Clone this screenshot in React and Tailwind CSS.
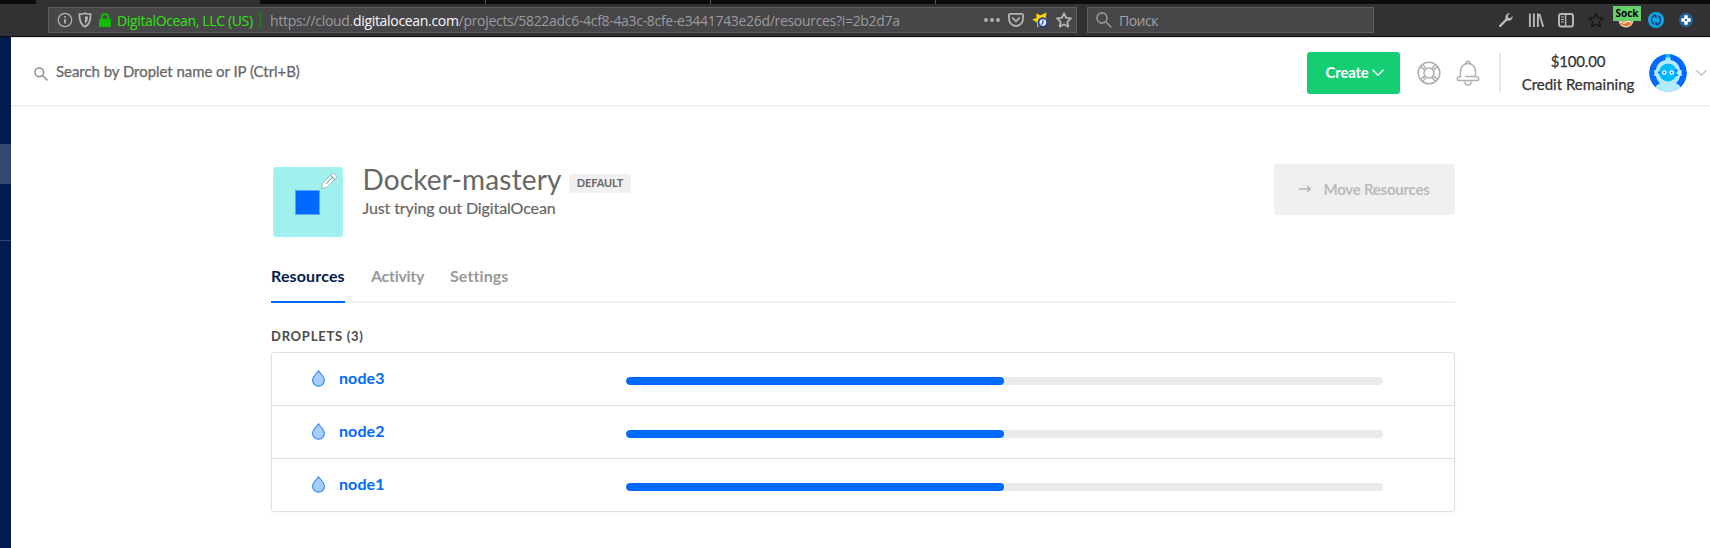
import React from "react";

const nodes = [
  { name: "node3", used: 49.9 },
  { name: "node2", used: 49.9 },
  { name: "node1", used: 49.9 },
];

function StarIcon({ className }) {
  return (
    <svg viewBox="0 0 16 16" width="16" height="16" className={className} fill="none" stroke="currentColor">
      <path d="M8 1.4l2.1 4.4 4.8.6-3.5 3.4.9 4.8L8 12.3l-4.3 2.3.9-4.8L1.1 6.4l4.8-.6z" strokeLinejoin="round" />
    </svg>
  );
}

function MagnifierIcon({ size, className, stroke }) {
  return (
    <svg viewBox="0 0 16 16" width={size} height={size} className={className} fill="none" stroke="currentColor" strokeWidth={stroke}>
      <circle cx="6" cy="6" r="5" />
      <path d="M9.7 9.7l5.6 5.6" />
    </svg>
  );
}

function AddressBar() {
  return (
    <div className="ml-12 flex h-[26px] w-[1029px] items-center border border-[#5e5e60] bg-[#474749] pl-2 pr-1">
      <svg viewBox="0 0 16 16" width="16" height="16" className="-mt-px" fill="none" stroke="#b4b4b5">
        <circle cx="8" cy="8" r="6.7" strokeWidth="1.2" />
        <path d="M8 7v4.6M8 4v1.7" strokeWidth="1.7" />
      </svg>
      <svg viewBox="0 0 14 16" width="14" height="16" className="-mt-px ml-[5px]" fill="none">
        <path d="M7 1.2c1.8.9 3.7 1 5.6 1 .1 6-1.2 10.2-5.6 12.6C2.6 12.4 1.3 8.2 1.4 2.2c1.9 0 3.8-.1 5.6-1z" stroke="#b4b4b5" strokeWidth="1.8" />
        <path d="M7 4c1 .4 2 .6 3 .7-.1 3.3-.9 5.6-3 7z" fill="#b4b4b5" />
      </svg>
      <svg viewBox="0 0 14 16" width="14" height="16" className="-mt-px ml-[6px]">
        <path d="M3.8 8V5.2a3.2 3.2 0 016.4 0V8" fill="none" stroke="#12bc00" strokeWidth="2" />
        <rect x="1" y="6.8" width="12" height="8.2" rx="1" fill="#12bc00" />
      </svg>
      <span className="ml-[5px] mt-px w-[144px] whitespace-nowrap text-[14px] leading-5 tracking-[-0.35px] text-[#30e60b]">
        DigitalOcean, LLC (US)
      </span>
      <span className="-ml-[1px] h-[18px] w-px bg-[#2b7a22]" />
      <span className="ml-[9px] mt-px flex-1 whitespace-nowrap text-[14px] leading-5 tracking-[-0.31px] text-[#9b9b9d]">
        https://cloud.<span className="text-[#f9f9fa]">digitalocean.com</span>
        /projects/5822adc6-4cf8-4a3c-8cfe-e3441743e26d/resources?i=2b2d7a
      </span>
      <div className="-mt-px flex items-center gap-2">
        <svg viewBox="0 0 16 16" width="16" height="16" fill="#b4b4b5">
          <circle cx="2" cy="8" r="1.9" />
          <circle cx="8" cy="8" r="1.9" />
          <circle cx="14" cy="8" r="1.9" />
        </svg>
        <svg viewBox="0 0 16 16" width="16" height="16" fill="none" stroke="#b4b4b5" strokeWidth="1.8" strokeLinecap="round" strokeLinejoin="round">
          <path d="M2 1.9h12a1 1 0 011 1V7A7 7 0 011 7V2.9a1 1 0 011-1z" />
          <path d="M4.8 6.2L8 9.3l3.2-3.1" />
        </svg>
        <svg viewBox="0 0 16 16" width="16" height="16">
          <path d="M4.3 1.5l4.2 1.7 6-2.7-.7 5 1.7 3.5-5.5 1-4.5 5.5-.7-5L.2 7.5l4.3-1.5z" fill="#ffd000" />
          <circle cx="10.8" cy="10.5" r="4.3" fill="#dfe6ee" stroke="#1b3f94" strokeWidth="1.7" />
          <path d="M10.9 7.8v3l-1.7 1.9" fill="none" stroke="#1b3f94" strokeWidth="1.1" />
        </svg>
        <StarIcon className="text-[#b4b4b5] [stroke-width:1.8]" />
      </div>
    </div>
  );
}

function BrowserChrome() {
  return (
    <div className="h-[37px] border-b border-[#0c0c0d] bg-[#323234] font-['Open_Sans',sans-serif]">
      <div className="flex h-1 bg-[#0c0c0d]">
        <div className="ml-9 w-[224px] bg-[#323234]" />
        <div className="ml-[225px] w-px bg-[#5a5a5c]" />
        <div className="ml-[224px] w-px bg-[#5a5a5c]" />
        <div className="ml-[224px] w-px bg-[#5a5a5c]" />
      </div>
      <div className="flex items-center pt-[3px]">
        <AddressBar />
        <div className="ml-[10px] flex h-[26px] w-[287px] items-center border border-[#5e5e60] bg-[#474749] pl-2">
          <MagnifierIcon size={16} stroke={1.8} className="-mt-px text-[#8f8f91]" />
          <span className="ml-[7px] mt-px text-[14px] leading-5 tracking-[-0.5px] text-[#a0a0a2]">Поиск</span>
        </div>
        <div className="-mt-px ml-[124px] flex items-center">
          <svg viewBox="0 0 16 16" width="16" height="16" fill="none" stroke="#b8b8b9">
            <path d="M2.2 13.8L8.6 7.4" strokeWidth="2.5" strokeLinecap="round" />
            <path d="M12 1.3a4 4 0 00-4.4 5.4 4 4 0 001.7 1.7 4 4 0 005.4-4.4L12.2 6.3l-2-.5-.5-2z" fill="#b8b8b9" stroke="none" />
          </svg>
          <svg viewBox="0 0 16 16" width="16" height="16" className="ml-[14px]" fill="none" stroke="#b8b8b9">
            <path d="M1.9 1.5v13.500M5.9 1.5v13.500M9.9 1.5v13.500M11.4 2L15.2 14.8" strokeWidth="1.9" />
          </svg>
          <svg viewBox="0 0 16 16" width="16" height="16" className="ml-[14px]" fill="none" stroke="#b8b8b9">
            <rect x="1" y="2" width="14" height="12.5" rx="2" strokeWidth="1.9" />
            <path d="M7.6 2v12.5" strokeWidth="1.4" />
            <path d="M3 5h3M3 7.5h3M3 10h3" strokeWidth="1.1" />
          </svg>
          <StarIcon className="ml-[14px] text-[#151517] [stroke-width:1.3]" />
          <div className="relative ml-[14px] h-4 w-4">
            <svg viewBox="0 0 16 16" width="16" height="16">
              <circle cx="8" cy="8" r="7.5" fill="#e8d9c6" />
              <path d="M2 9.5a6.2 6.2 0 0012 0z" fill="#e8772a" />
              <path d="M3 10l3 1.5 4-2.5 3 1.5" stroke="#fff" fill="none" />
            </svg>
            <span className="absolute -left-[5px] -top-[6px] h-[15px] w-7 bg-[#67d06a] text-center text-[10px] font-bold leading-[15px] text-black">
              Sock
            </span>
          </div>
          <svg viewBox="0 0 16 16" width="16" height="16" className="ml-[14px]">
            <circle cx="8" cy="8" r="8" fill="#0fa8f0" />
            <path d="M6.2 12.2A4.8 4.8 0 015.6 3.9M9.8 3.8a4.8 4.8 0 01.6 8.3" fill="none" stroke="#17436b" strokeWidth="1.5" />
            <path d="M4.300 2.600h4.300v4.300zM11.700 13.400H7.400V9.100z" fill="#17436b" />
          </svg>
          <svg viewBox="0 0 16 16" width="16" height="16" className="ml-[14px]">
            <circle cx="8" cy="8" r="7.2" fill="#24618f" />
            <path d="M6.3 3.3h3.4v9.4H6.3zM3.3 6.3h9.4v3.4H3.3z" fill="#fff" />
            <rect x="7" y="7" width="2" height="2" fill="#24618f" />
          </svg>
        </div>
      </div>
    </div>
  );
}

function RobotAvatar() {
  return (
    <svg viewBox="0 0 38 38" width="38" height="38" className="rounded-full">
      <circle cx="19" cy="19" r="19" fill="#0069ff" />
      <path d="M17 0h4v5h-4z" fill="#00c8ff" />
      <path d="M7 38v-6c2-2 4-3 6-4h12c2 1 4 2 6 4v6z" fill="#b3ebfa" />
      <path d="M16.5 3.5h5V6c5.5 1.2 9 5 9.5 10h1.7v6H31c-1 6-6 10-12 10S8 28 7 22H5.3v-6H7c.5-5 4-8.8 9.5-10z" fill="#b3ebfa" />
      <circle cx="19" cy="18.5" r="9" fill="#00baff" />
      <path d="M26.5 15.5h2v2h-2zM26.5 20h2v2h-2zM9 17.5h2v2H9z" fill="#0069ff" />
      <circle cx="15.3" cy="18.5" r="2.3" fill="#fff" />
      <circle cx="22.7" cy="18.5" r="2.3" fill="#fff" />
      <circle cx="15.3" cy="18.5" r="1" fill="#0069ff" />
      <circle cx="22.7" cy="18.5" r="1" fill="#0069ff" />
    </svg>
  );
}

function TopBar() {
  return (
    <header className="flex h-[69px] items-center border-b border-t border-b-[#ececec] border-t-[#e6e6e6] pl-[23px] pr-[3px] shadow-[0_1px_4px_rgba(0,0,0,0.05)]">
      <MagnifierIcon size={14} stroke={1.9} className="mt-[4px] text-[#999]" />
      <span className="-mt-px ml-2 flex-1 text-[15px] leading-5 tracking-[-0.05px] text-[#676767] [-webkit-text-stroke:0.25px]">
        Search by Droplet name or IP (Ctrl+B)
      </span>
      <button className="mt-[3px] flex h-[42px] w-[93px] items-center rounded-[3px] bg-[#15cd72] pl-[18.5px] text-[15px] font-bold leading-5 tracking-[-0.2px] text-white">
        <span className="-mt-[3px] w-[43px] whitespace-nowrap">Create</span>
        <svg viewBox="0 0 12 8" width="12" height="8" className="ml-[3px]" fill="none" stroke="white" strokeWidth="1.5">
          <path d="M.6.8L6 6.3 11.4.8" />
        </svg>
      </button>
      <svg viewBox="0 0 24 24" width="24" height="24" className="ml-[17px] mt-[3px]" fill="none" stroke="#b0b0b0" strokeWidth="1.5">
        <circle cx="12" cy="12" r="10.8" />
        <circle cx="12" cy="12" r="5" />
        <path d="M3.4 5.6l4.4 3.6M5.6 3.4l3.6 4.4M18.4 3.4l-3.6 4.4M20.6 5.6l-4.4 3.6M3.4 18.4l4.4-3.6M5.6 20.6l3.6-4.4M18.4 20.6l-3.6-4.4M20.6 18.4l-4.4-3.6" />
      </svg>
      <svg viewBox="0 0 24 26" width="24" height="26" className="ml-[15px] mt-[2px]" fill="none" stroke="#b0b0b0" strokeWidth="1.5" strokeLinecap="round">
        <path d="M9.8 3.5a2.2 2.2 0 014.4 0" />
        <path d="M10 16.5H19.500V11a7.5 7.5 0 00-15 0v5.500c-2 0-3.200 1-3.200 2.200s.8 1.900 2 1.900h17.400c1.200 0 2-.8 2-1.900 0-1.300-1.200-2.200-3.200-2.200" />
        <path d="M9 22a3 3 0 006 0" />
      </svg>
      <div className="ml-[19px] mt-[2px] h-[39px] w-[2px] bg-[#e8e8e8]" />
      <div className="ml-[20px] mt-[3px] w-[114px] whitespace-nowrap text-center text-[15px] leading-[23px] text-[#333] [-webkit-text-stroke:0.25px]">
        <div className="tracking-[-0.2px]">$100.00</div>
        <div>Credit Remaining</div>
      </div>
      <div className="ml-[14px] mt-[2px]">
        <RobotAvatar />
      </div>
      <svg viewBox="0 0 12 8" width="11" height="8" className="ml-[9px] mt-[2px]" fill="none" stroke="#bbb" strokeWidth="1.4">
        <path d="M.6 1.2L6 6.4l5.4-5.2" />
      </svg>
    </header>
  );
}

function ProjectHeader() {
  return (
    <section className="flex pl-[2px]">
      <div className="relative mt-[3px] flex h-[70px] w-[70px] items-center justify-center rounded-[3px] border border-[#9bfaf8] bg-[#a1f0ee]">
        <div className="mr-px h-[25px] w-[25px] border border-[#55aaf5] bg-[#0069ff]" />
        <svg viewBox="0 0 20 20" width="20" height="20" className="absolute right-[3px] top-[3px]">
          <path d="M2.5 17.5l1-5.2L13.3 2.5c1.1-1.1 5.3 3.1 4.2 4.2L7.7 16.5z" fill="#fff" stroke="#8eb5b5" strokeWidth=".9" />
          <path d="M7 12.8l6.2-6.2M11.6 4.3l4.1 4.1" stroke="#86adad" strokeWidth="1.2" />
        </svg>
      </div>
      <div className="-mt-[2px] ml-[19.5px] flex-1 text-[#676767]">
        <div className="flex items-center">
          <h1 className="w-[200.5px] whitespace-nowrap text-[28px] leading-[34px] tracking-[0.15px]">Docker-mastery</h1>
          <span className="ml-[6px] mt-[8px] flex h-[19px] w-[62px] items-center justify-center rounded-[3px] bg-[#f1f1f1] text-[11px] font-bold tracking-[-0.1px]">
            DEFAULT
          </span>
        </div>
        <p className="mt-px text-[16px] leading-[22px] tracking-[-0.1px] [-webkit-text-stroke:0.2px]">Just trying out DigitalOcean</p>
      </div>
      <button className="flex h-[51px] w-[181px] items-center rounded-[3px] bg-[#f0f0f0] pl-[25px] text-[15px] font-bold leading-5 tracking-[-0.25px] text-[#bbb]">
        <svg viewBox="0 0 12 8" width="12" height="8" className="-mt-[2px]" fill="none" stroke="#b3b3b3" strokeWidth="1.3">
          <path d="M0 4h11.3M8 .7L11.3 4 8 7.3" />
        </svg>
        <span className="-mt-[2px] ml-[12.5px]">Move Resources</span>
      </button>
    </section>
  );
}

function Tabs() {
  return (
    <nav className="mt-[17px] flex h-[49px] items-start gap-[26px] border-b-2 border-[#f0f0f0] pt-[11px] text-[16px] font-bold leading-[22px] text-[#999]">
      <span className="h-[38px] w-[74px] whitespace-nowrap border-b-2 border-[#0069ff] tracking-[0.15px] text-[#031b4e]">Resources</span>
      <span className="w-[53px] whitespace-nowrap tracking-[-0.3px]">Activity</span>
      <span className="tracking-[0.1px]">Settings</span>
    </nav>
  );
}

function Droplets() {
  return (
    <section>
      <h2 className="mt-[23px] text-[13px] font-bold leading-5 tracking-[0.75px] text-[#4a4a4a]">DROPLETS (3)</h2>
      <ul className="mt-[6px] rounded-[3px] border border-[#dfdfdf] shadow-[0_2px_4px_rgba(0,0,0,0.04)]">
        {nodes.map((node) => (
          <li key={node.name} className="flex h-[53px] items-center border-b border-[#dfdfdf] pl-[39px] last:h-[52px] last:border-b-0">
            <svg viewBox="0 0 14 17" width="15" height="17" className="-mt-[2px]">
              <path d="M7 .8c2 2.7 5.9 5.9 5.9 9.4a5.9 5.9 0 01-11.8 0C1.1 6.7 5 3.5 7 .8z" fill="#a8cdff" stroke="#2f85f7" strokeWidth="1.1" />
            </svg>
            <span className="-mt-[2px] ml-[13px] w-[287px] text-[16px] font-bold leading-[22px] tracking-[0.1px] text-[#0069ff]">{node.name}</span>
            <div className="mt-1 h-2 w-[757px] overflow-hidden rounded-full bg-[#ebebeb]">
              <div className="h-full rounded-full bg-[#0069ff]" style={{ width: `${node.used}%` }} />
            </div>
          </li>
        ))}
      </ul>
    </section>
  );
}

export default function App() {
  return (
    <div className="flex h-[548px] w-[1710px] flex-col overflow-hidden bg-white">
      <BrowserChrome />
      <div className="flex flex-1 font-['Lato',sans-serif]">
        <aside className="w-[11px] bg-[#031b4e] pt-[107px]">
          <div className="h-10 bg-[#33486f]" />
          <div className="mt-14 h-px bg-[#33486f]" />
        </aside>
        <div className="flex-1">
          <TopBar />
          <main className="ml-[260px] w-[1184px] pt-[58px]">
            <ProjectHeader />
            <Tabs />
            <Droplets />
          </main>
        </div>
      </div>
    </div>
  );
}
